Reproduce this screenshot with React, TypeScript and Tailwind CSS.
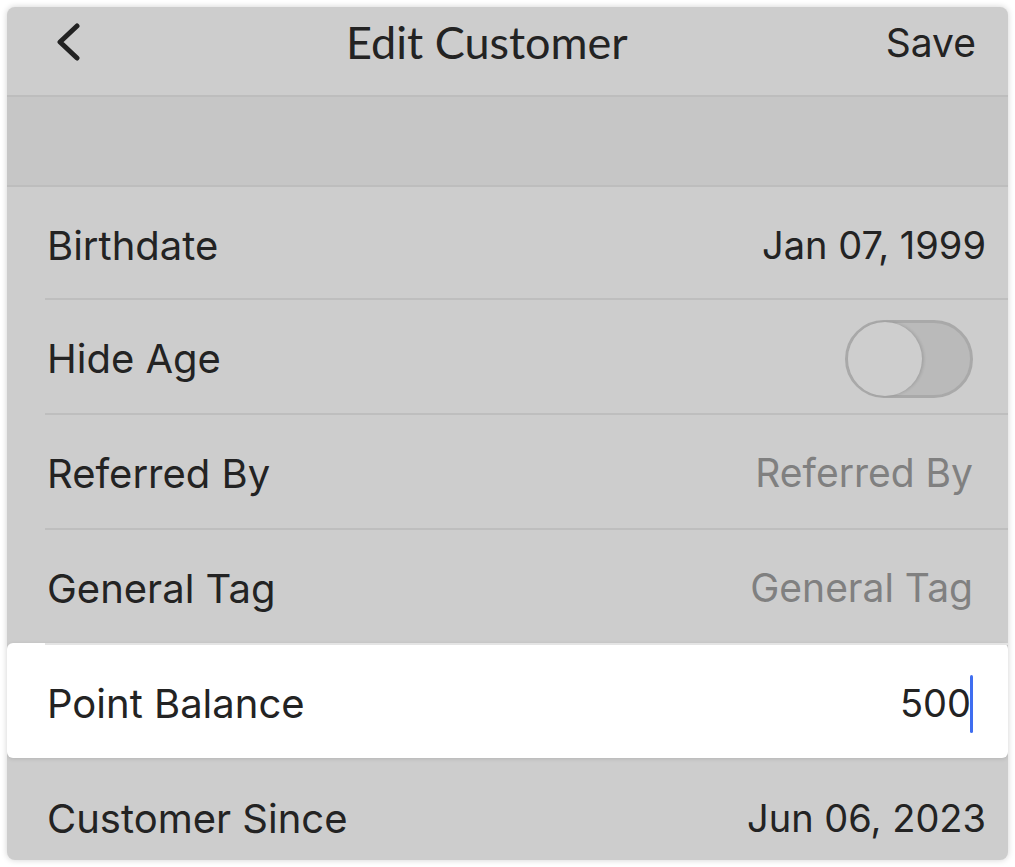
import React from "react";

const font = { fontFamily: "Inter, 'Noto Sans', sans-serif" };

function Row({
  label,
  children,
  divider = true,
  h = "h-[115px]",
}: {
  label: string;
  children?: React.ReactNode;
  divider?: boolean;
  h?: string;
}) {
  return (
    <div className={`relative flex items-center justify-between pl-[40px] pt-[6px] ${h}`}>
      {divider && <div className="absolute left-[38px] right-0 top-0 h-[2px] bg-[#bebebe]" />}
      <span className="text-[40px] text-[#232323]">{label}</span>
      {children}
    </div>
  );
}

export default function App() {
  return (
    <div className="min-h-screen bg-white p-[7px]" style={font}>
      <div className="h-[853px] overflow-hidden rounded-[8px] bg-[#cdcdcd] shadow-[0_0_6px_rgba(0,0,0,0.18)]">
        {/* Header */}
        <div className="flex h-[90px] items-center justify-between border-b-2 border-[#bdbdbd] pl-[39px] pr-[32px]">
          <svg width="34" height="44" viewBox="0 0 34 44" className="mt-[-18px]">
            <path d="M31 6 L14 22 L31 38" fill="none" stroke="#222" strokeWidth="5" strokeLinecap="round" strokeLinejoin="round" />
          </svg>
          <span
            className="mt-[-16px] ml-[8px] text-[45px] text-[#232323]"
            style={{ fontFamily: "Lato, sans-serif" }}
          >
            Edit Customer
          </span>
          <span className="mt-[-16px] text-[39px] text-[#232323]">Save</span>
        </div>

        {/* Spacer */}
        <div className="h-[90px] bg-[#c6c6c6] border-b-2 border-[#bdbdbd]" />

        <Row label="Birthdate" divider={false} h="h-[111px]">
          <span className="pr-[22px] text-[38px] text-[#232323]">Jan 07, 1999</span>
        </Row>
        <Row label="Hide Age">
          <div className="mr-[35px] flex h-[78px] w-[128px] items-center rounded-full border-[3px] border-[#a9a9a9] bg-[#bababa]">
            <div className="h-[74px] w-[74px] rounded-full bg-[#cecece] shadow-[2px_0_3px_rgba(0,0,0,0.12)]" />
          </div>
        </Row>
        <Row label="Referred By">
          <span className="pr-[35px] text-[39px] text-[#808080]">Referred By</span>
        </Row>
        <Row label="General Tag">
          <span className="pr-[35px] text-[39px] text-[#808080]">General Tag</span>
        </Row>
        <div className="relative z-10 rounded-[6px] bg-white shadow-[0_1px_4px_rgba(0,0,0,0.12)]">
          <div className="relative flex h-[115px] items-center justify-between pl-[40px] pt-[6px]">
            <div className="absolute left-[38px] right-0 top-0 h-[2px] bg-[#e4e4e4]" />
            <span className="text-[40px] text-[#232323]">Point Balance</span>
            <div className="flex items-center pr-[35px]">
              <span className="text-[38px] text-[#232323]">500</span>
              <span className="ml-[-1px] h-[58px] w-[3px] rounded bg-[#3f6ef0]" />
            </div>
          </div>
        </div>
        <Row label="Customer Since" divider={false}>
          <span className="pr-[22px] text-[38px] text-[#232323]">Jun 06, 2023</span>
        </Row>
      </div>
    </div>
  );
}
